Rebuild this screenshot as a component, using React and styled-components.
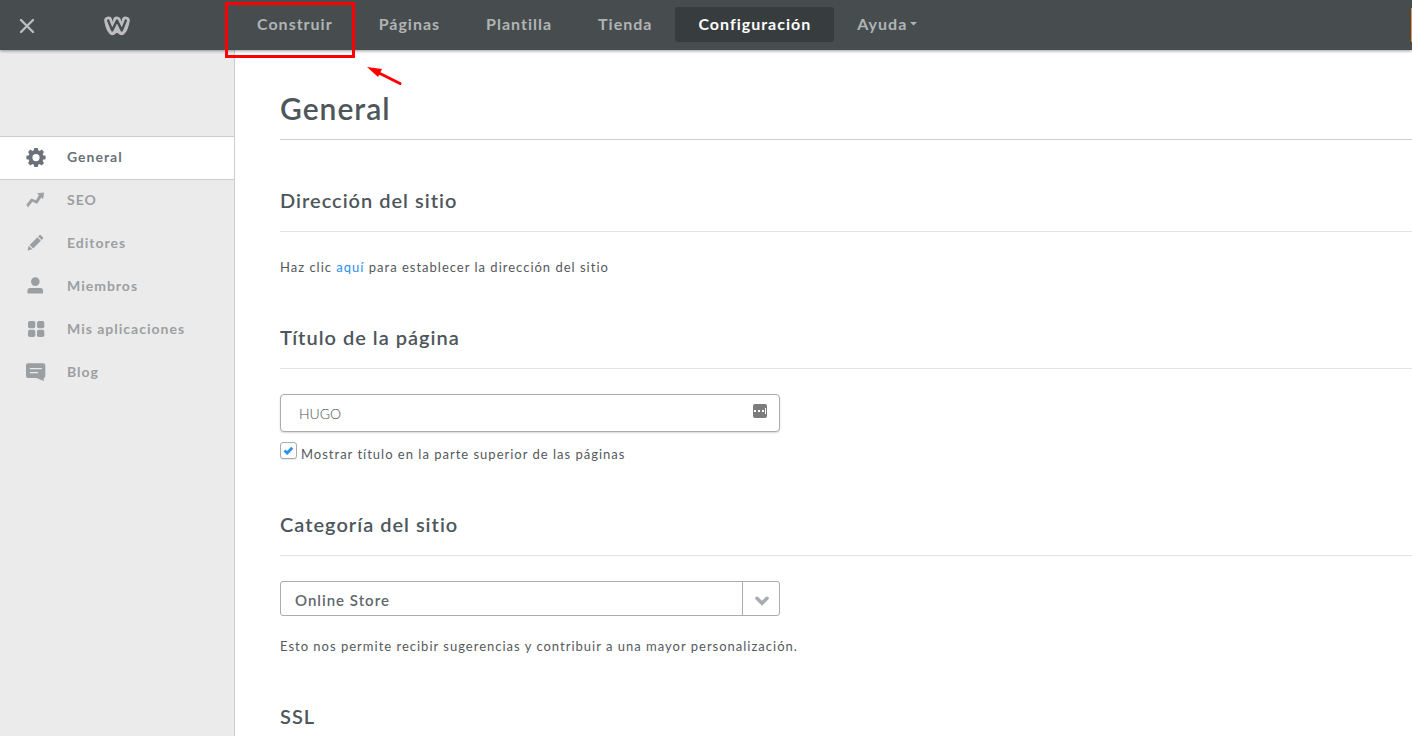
import React, { useState } from "react";
import styled, { createGlobalStyle } from "styled-components";

const GlobalStyle = createGlobalStyle`
  * {
    box-sizing: border-box;
  }

  body {
    margin: 0;
    background: #fff;
    color: #54595c;
    font-family: Lato, "Open Sans", sans-serif;
    font-size: 13px;
    line-height: 20px;
    letter-spacing: 1px;
  }

  button,
  input,
  select {
    font-family: inherit;
    letter-spacing: inherit;
  }
`;

const Page = styled.div`
  min-height: 100vh;
  display: flex;
  flex-direction: column;
  position: relative;
`;

const TopBar = styled.header`
  height: 50px;
  display: flex;
  align-items: center;
  padding-bottom: 1px;
  background: #474c4f;
  box-shadow: 0 1px 3px rgba(0, 0, 0, 0.4);
  z-index: 1;
`;

const Brand = styled.div`
  width: 234px;
  display: flex;
  align-items: center;
  justify-content: space-between;
  padding: 3px 103px 0 19px;
`;

const CloseButton = styled.button`
  display: flex;
  padding: 0;
  border: 0;
  background: none;
  color: #bbbdbf;
`;

const Nav = styled.nav`
  display: flex;
  align-items: center;
`;

const NavButton = styled.button`
  height: 35px;
  display: flex;
  align-items: center;
  gap: 3px;
  padding: 0 23px 2px;
  border: 0;
  border-radius: 3px;
  background: ${({ $active }) => ($active ? "#373c3e" : "transparent")};
  color: ${({ $active }) => ($active ? "#fff" : "#b1b4b5")};
  font-size: 16px;
  font-weight: 700;
`;

const PublishEdge = styled.div`
  width: 1px;
  height: 34px;
  margin-left: auto;
  background: #f0973a;
`;

const Body = styled.div`
  flex: 1;
  display: flex;
`;

const Sidebar = styled.aside`
  width: 235px;
  flex-shrink: 0;
  padding-top: 86px;
  background: #ebebeb;
  border-right: 1px solid #cacccd;
`;

const SideLink = styled.a`
  height: ${({ $active }) => ($active ? "44px" : "43px")};
  display: flex;
  align-items: center;
  gap: 20px;
  padding: 0 0 2px 25px;
  margin-bottom: ${({ $active }) => ($active ? "-1px" : "0")};
  border: solid #cacccd;
  border-width: ${({ $active }) => ($active ? "1px 0" : "0")};
  background: ${({ $active }) => ($active ? "#fff" : "transparent")};
  color: ${({ $active }) => ($active ? "#6a7178" : "#9b9fa2")};
  font-size: 14px;
  font-weight: 700;
  text-decoration: none;

  svg {
    width: 22px;
    height: 22px;
    fill: currentColor;
  }
`;

const Main = styled.main`
  flex: 1;
  min-width: 0;
  padding: 40px 0 0 45px;
`;

const PageTitle = styled.h1`
  margin: 0;
  padding-bottom: 13px;
  border-bottom: 1px solid #cacccd;
  color: #4d565b;
  font-size: 30px;
  font-weight: 600;
  line-height: 36px;
`;

const Section = styled.section`
  margin-top: 48px;
`;

const SectionTitle = styled.h2`
  margin: 0;
  color: #4d565b;
  font-size: 20px;
  font-weight: 600;
  line-height: 24px;
`;

const SectionBody = styled.div`
  margin-top: 19px;
  padding-top: 25px;
  border-top: 1px solid #e2e3e4;
`;

const Text = styled.p`
  margin: 0;
`;

const Hint = styled(Text)`
  margin-top: 20px;
`;

const Link = styled.a`
  color: #2990ea;
  text-decoration: none;
`;

const Field = styled.div`
  width: 500px;
  max-width: 100%;
  position: relative;
`;

const TextInput = styled.input`
  width: 100%;
  height: 38px;
  display: block;
  padding: 0 50px 0 18px;
  border: 1px solid #a8abaf;
  border-radius: 4px;
  box-shadow: 0 1px 2px rgba(0, 0, 0, 0.15);
  background: #fff;
  color: #4d4f51;
  font-size: 14px;
  font-weight: 300;
  letter-spacing: normal;
`;

const FieldIcon = styled.svg`
  position: absolute;
  top: 10px;
  right: 13px;
`;

const CheckRow = styled.label`
  height: 22px;
  display: flex;
  align-items: flex-end;
  gap: 4px;
  margin-top: 10px;
`;

const CheckBox = styled.span`
  width: 17px;
  height: 17px;
  align-self: flex-start;
  position: relative;

  svg {
    position: absolute;
    top: 4px;
    left: 3px;
    pointer-events: none;
  }
`;

const CheckInput = styled.input`
  width: 17px;
  height: 17px;
  display: block;
  margin: 0;
  appearance: none;
  border: 1px solid #a8abaf;
  border-radius: 3px;
  background: #fff;
  box-shadow: 0 1px 1px rgba(0, 0, 0, 0.1);
`;

const Select = styled.select`
  width: 100%;
  height: 35px;
  display: block;
  padding: 3px 50px 0 14px;
  appearance: none;
  border: 1px solid #a8abaf;
  border-radius: 3px;
  background: #fff;
  color: #5f676c;
  font-size: 15px;
  font-weight: 600;
`;

const SelectArrow = styled.span`
  width: 38px;
  height: 35px;
  display: flex;
  align-items: center;
  justify-content: center;
  padding-top: 5px;
  position: absolute;
  top: 0;
  right: 0;
  border-left: 1px solid #a8abaf;
  pointer-events: none;
`;

const Highlight = styled.div`
  width: 130px;
  height: 56px;
  position: absolute;
  top: 2px;
  left: 225px;
  z-index: 2;
  border: 3px solid #f00;
  pointer-events: none;
`;

const Pointer = styled.svg`
  position: absolute;
  top: 64px;
  left: 365px;
  z-index: 2;
`;

const navItems = [
  "Construir",
  "Páginas",
  "Plantilla",
  "Tienda",
  "Configuración",
  "Ayuda",
];

const sideItems = [
  {
    label: "General",
    icon: (
      <path
        fillRule="evenodd"
        d="M9.2 2h3.6l.4 2.3 1.5.6 2-1.3 2.3 2.4-1.3 2 .6 1.4 2.3.4v3.4l-2.3.4-.6 1.5 1.3 2-2.4 2.3-2-1.3-1.4.6-.4 2.3H9.3l-.4-2.3-1.5-.6-2 1.3L3 17.1l1.3-2-.6-1.5-2.3-.4V9.8l2.3-.4.6-1.5-1.3-2 2.4-2.3 2 1.3 1.4-.6zM11 8a3.6 3.6 0 1 0 0 7.2A3.6 3.6 0 0 0 11 8z"
      />
    ),
  },
  {
    label: "SEO",
    icon: (
      <path
        d="M12.8 4.6l5.8-.7-.8 5.7-1.6-1.6-4.2 6.3-4.7-2-4.3 5.5-1.2-2.1 4.5-5.8 4.9 1.9 3.1-5.7z"
        stroke="currentColor"
        strokeWidth="0.8"
        strokeLinejoin="round"
      />
    ),
  },
  {
    label: "Editores",
    icon: (
      <path d="M2.5 18.5l1.3-4.7 3.5 3.5zM4.7 12.9l7.7-7.7 3.5 3.5-7.7 7.7zM13.2 4.4l1.2-1.2q.7-.7 1.4 0l2.1 2.1q.7.7 0 1.4l-1.2 1.2z" />
    ),
  },
  {
    label: "Miembros",
    icon: (
      <>
        <circle cx="10.3" cy="6.6" r="4.3" />
        <path d="M2.5 18.5v-3q0-2.5 2.5-2.5h10.5q2.5 0 2.5 2.5v3z" />
      </>
    ),
  },
  {
    label: "Mis aplicaciones",
    icon: (
      <>
        <rect x="3" y="3" width="7.3" height="7.3" rx="1.8" />
        <rect x="12" y="3" width="7.3" height="7.3" rx="1.8" />
        <rect x="3" y="11.7" width="7.3" height="7.3" rx="1.8" />
        <rect x="12" y="11.7" width="7.3" height="7.3" rx="1.8" />
      </>
    ),
  },
  {
    label: "Blog",
    icon: (
      <path
        fillRule="evenodd"
        d="M3 2.3h15.3q2 0 2 2v10.6q0 2-1.6 2v3L11.6 17H3q-2 0-2-2V4.3q0-2 2-2zM4.8 7v1.2h12V7zm0 4v1.2h8.3V11z"
      />
    ),
  },
];

const App = () => {
  const [title, setTitle] = useState("HUGO");
  const [showTitle, setShowTitle] = useState(true);

  return (
    <Page>
      <GlobalStyle />
      <TopBar>
        <Brand>
          <CloseButton aria-label="Cerrar">
            <svg width="16" height="16" viewBox="0 0 16 16">
              <path
                d="M2 2l12 12M14 2L2 14"
                stroke="currentColor"
                strokeWidth="2.4"
                strokeLinecap="round"
              />
            </svg>
          </CloseButton>
          <svg width="28" height="20" viewBox="0 0 28 20" fill="none">
            <path
              d="M5.2 4.6q1.6 8.6 4.3 10.6q2.5-1.2 4.5-10.6q2 9.4 4.5 10.6q2.7-2 4.3-10.6"
              stroke="#bbbdbf"
              strokeWidth="8"
              strokeLinecap="round"
              strokeLinejoin="round"
            />
            <path
              d="M5.2 4.6L9.2 14.4L14 4.6L18.8 14.4L22.8 4.6"
              stroke="#474c4f"
              strokeWidth="2.4"
              strokeLinecap="round"
              strokeLinejoin="round"
            />
          </svg>
        </Brand>
        <Nav>
          {navItems.map((item) => (
            <NavButton key={item} $active={item === "Configuración"}>
              {item}
              {item === "Ayuda" && (
                <svg width="7" height="4" viewBox="0 0 7 4">
                  <path d="M0 0h7L3.5 3.5z" fill="currentColor" />
                </svg>
              )}
            </NavButton>
          ))}
        </Nav>
        <PublishEdge />
      </TopBar>
      <Body>
        <Sidebar>
          {sideItems.map(({ label, icon }) => (
            <SideLink key={label} href="#" $active={label === "General"}>
              <svg viewBox="0 0 22 22">{icon}</svg>
              {label}
            </SideLink>
          ))}
        </Sidebar>
        <Main>
          <PageTitle>General</PageTitle>
          <Section>
            <SectionTitle>Dirección del sitio</SectionTitle>
            <SectionBody>
              <Text>
                Haz clic <Link href="#">aquí</Link> para establecer la dirección
                del sitio
              </Text>
            </SectionBody>
          </Section>
          <Section>
            <SectionTitle id="page-title">Título de la página</SectionTitle>
            <SectionBody>
              <Field>
                <TextInput
                  aria-labelledby="page-title"
                  value={title}
                  onChange={(e) => setTitle(e.target.value)}
                />
                <FieldIcon width="14" height="14" viewBox="0 0 14 14">
                  <rect width="14" height="14" rx="2" fill="#7c7c7c" />
                  <path
                    d="M1 6h2v2H1zM5 6h2v2H5zM9 6h2v2H9zM12 4h1v6h-1z"
                    fill="#fff"
                  />
                </FieldIcon>
              </Field>
              <CheckRow>
                <CheckBox>
                  <CheckInput
                    type="checkbox"
                    checked={showTitle}
                    onChange={(e) => setShowTitle(e.target.checked)}
                  />
                  {showTitle && (
                    <svg width="11" height="9" viewBox="0 0 11 9">
                      <path
                        d="M1.5 4.5l2.7 2.5L9.2 1.8"
                        fill="none"
                        stroke="#2990ea"
                        strokeWidth="2.8"
                      />
                    </svg>
                  )}
                </CheckBox>
                Mostrar título en la parte superior de las páginas
              </CheckRow>
            </SectionBody>
          </Section>
          <Section>
            <SectionTitle id="category">Categoría del sitio</SectionTitle>
            <SectionBody>
              <Field>
                <Select aria-labelledby="category">
                  <option>Online Store</option>
                </Select>
                <SelectArrow>
                  <svg width="14" height="10" viewBox="0 0 14 10">
                    <path
                      d="M2 2.3l5 5 5-5"
                      fill="none"
                      stroke="#a8abaf"
                      strokeWidth="3.5"
                      strokeLinecap="round"
                    />
                  </svg>
                </SelectArrow>
              </Field>
              <Hint>
                Esto nos permite recibir sugerencias y contribuir a una mayor
                personalización.
              </Hint>
            </SectionBody>
          </Section>
          <Section>
            <SectionTitle>SSL</SectionTitle>
          </Section>
        </Main>
      </Body>
      <Highlight />
      <Pointer width="38" height="24" viewBox="0 0 38 24">
        <path d="M2 3l15 2-4 8z" fill="#f00" />
        <path
          d="M14 9l21 10.5"
          stroke="#f00"
          strokeWidth="3"
          strokeLinecap="round"
        />
      </Pointer>
    </Page>
  );
};

export default App;
